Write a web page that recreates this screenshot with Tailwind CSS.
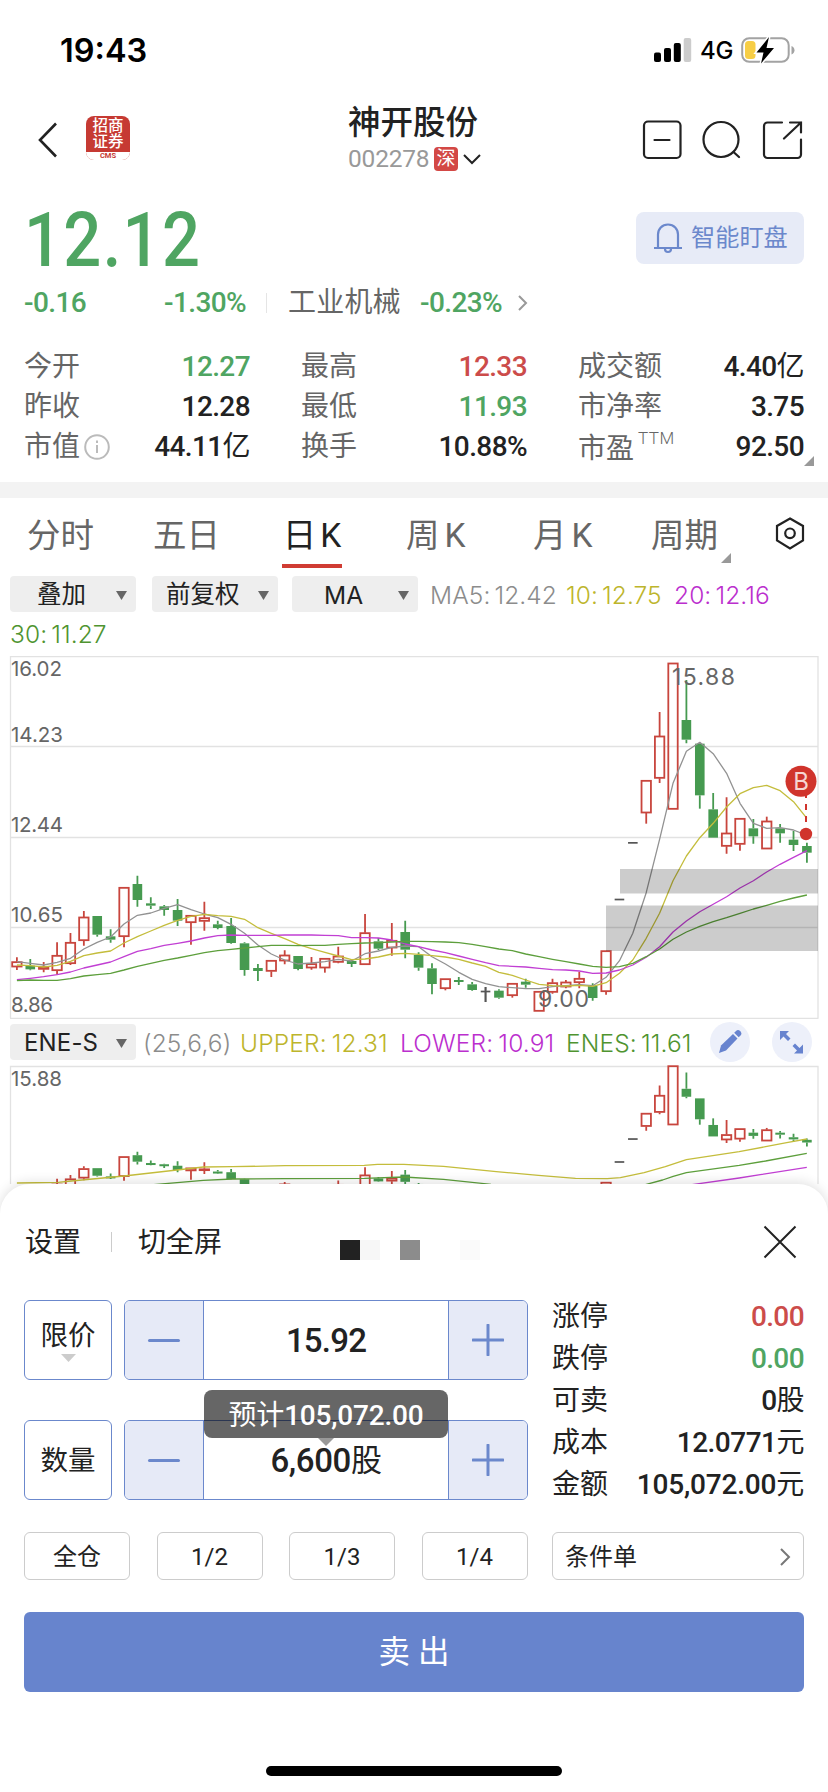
<!DOCTYPE html>
<html lang="zh-CN">
<head>
<meta charset="utf-8">
<title>神开股份 002278</title>
<script src="https://cdn.jsdelivr.net/npm/@tailwindcss/browser@4"></script>
</head>
<body class="w-[828px] h-[1792px] overflow-hidden bg-white text-[#222] font-['Roboto','Noto_Sans_CJK_SC',sans-serif] flex flex-col">

<!-- status bar -->
<div class="h-[98px] shrink-0 flex justify-between pl-[60px] pr-[33px]">
  <div class="mt-[30px] h-10 leading-[41px] text-[32.500px] font-semibold text-black font-['Inter',sans-serif]">19:43</div>
  <div class="mt-[30px] h-10 flex items-center">
    <svg class="w-[38px] h-[24px]" viewBox="0 0 38 24"><rect x="0" y="14.5" width="7" height="9.500" rx="2"/><rect x="10" y="10" width="7" height="14" rx="2"/><rect x="19.800" y="5" width="7" height="19" rx="2"/><rect x="29.700" y="0" width="7.500" height="24" rx="2" fill="#ccc"/></svg>
    <div class="ml-2 mt-px w-[34px] text-[24px] text-black font-medium font-['Inter',sans-serif] tracking-[-0.3px]">4G</div>
    <svg class="ml-[7px] w-[54px] h-[28px]" viewBox="0 0 54 28"><rect x="1.200" y="2.200" width="46.500" height="23.600" rx="7" fill="none" stroke="#a3a3a3" stroke-width="2"/><path d="M50.500 10v8.500c4-1.500 4-7 0-8.500z" fill="#a3a3a3"/><rect x="4" y="5" width="10.500" height="18" rx="3.500" fill="#f7ce46"/><path d="M28 1 15.500 16.500h7L20 27.500 33 12h-7.500z" stroke="#fff" stroke-width="3"/><path d="M28 1 15.500 16.500h7L20 27.500 33 12h-7.500z"/></svg>
  </div>
</div>

<!-- header -->
<div class="h-[92px] shrink-0 grid grid-cols-[348px_1fr_191px]">
  <div class="flex pt-[18px] pl-[38px]">
    <svg class="w-5 h-[48px]" viewBox="0 0 20 48"><path d="M18 7.500 2 24 18 40.500" fill="none" stroke="#222" stroke-width="2.600"/></svg>
    <div class="ml-[28px] w-[44px] h-[44px] rounded-[8px] overflow-hidden bg-[#c63a33] flex flex-col items-center">
      <div class="h-[36px] shrink-0 pt-[2px] text-white font-medium text-[15.500px] leading-[16px] text-center">招商<br>证券</div>
      <div class="h-[8px] w-full bg-white text-[#c63a33] text-[7.500px] leading-[7px] font-bold text-center">CMS</div>
    </div>
  </div>
  <div class="flex flex-col">
    <div class="mt-[6px] h-[38px] leading-[38px] text-[32.500px] font-medium">神开股份</div>
    <div class="mt-[3px] h-7 flex items-center">
      <span class="text-[24.500px] text-[#999] w-[86px] tracking-[-0.2px]">002278</span>
      <span class="w-6 h-6 rounded bg-[#d34845] text-white text-[19px] leading-6 text-center">深</span>
      <svg class="ml-[5px] w-[18px] h-[12px]" viewBox="0 0 18 12"><path d="M1 2l8 8 8-8" fill="none" stroke="#222" stroke-width="2"/></svg>
    </div>
  </div>
  <svg class="w-[191px] h-[92px]" viewBox="637 98 191 92" fill="none" stroke="#222" stroke-width="2.200" stroke-linecap="round"><rect x="644" y="121.500" width="36.500" height="36.500" rx="4"/><path d="M654.500 140h15M733.500 152l5.500 5M782 122.500h-14.500a3.500 3.500 0 0 0-3.500 3.500v28.500a3.500 3.500 0 0 0 3.500 3.500h30a3.500 3.500 0 0 0 3.500-3.500V139.500M790 122.500h11v10M801 122.500l-17 16"/><circle cx="721" cy="139.500" r="17.500"/></svg>
</div>

<!-- price -->
<div class="h-[92px] shrink-0 flex justify-between pl-[24px] pr-[24px]">
  <div class="mt-[10px] h-20 leading-[80px] text-[76px] font-medium text-[#4fa562] tracking-[1.5px] origin-left scale-x-[0.88]">12.12</div>
  <div class="mt-[22px] w-[168px] h-[52px] rounded-lg bg-[#e7ebf7] flex items-center pl-[17px]">
    <svg class="w-[30px] h-[32px]" viewBox="0 0 30 32" fill="none" stroke="#6b88cc" stroke-width="2.200"><path d="M1 26h28M5 26V12.500C5 7 9 2.500 15 2.500S25 7 25 12.500V26M12 27c0 4 6 4 6 0"/></svg>
    <span class="ml-[8px] mt-px text-[24.200px] text-[#6b88cc]">智能盯盘</span>
  </div>
</div>
<div class="h-[40px] shrink-0 flex items-center pt-[2px] pl-[24px] text-[28px] font-medium text-[#4fa562] tracking-[-0.6px]">
  <span class="w-[140px]">-0.16</span><span class="w-[102px]">-1.30%</span>
  <span class="w-px h-5 bg-[#e5e5e5]"></span>
  <span class="ml-[21px] w-[132px] text-[#666] font-normal tracking-[0.2px]">工业机械</span>
  <span class="w-[98px]">-0.23%</span>
  <svg class="w-[10px] h-4" viewBox="0 0 10 16"><path d="M1 1l7 7-7 7" fill="none" stroke="#999" stroke-width="2"/></svg>
</div>

<!-- quote figures -->
<div class="h-[160px] shrink-0 relative pt-[25px] pl-[24px] pr-[24px] grid grid-cols-[226px_226px_226px] gap-x-[51px] auto-rows-[40px] text-[28px] leading-[40px]">
  <div class="flex justify-between"><span class="text-[#666]">今开</span><span class="font-medium text-[#4fa562] tracking-[-0.6px]">12.27</span></div>
  <div class="flex justify-between"><span class="text-[#666]">最高</span><span class="font-medium text-[#cc4c4a] tracking-[-0.6px]">12.33</span></div>
  <div class="flex justify-between"><span class="text-[#666]">成交额</span><span class="font-medium tracking-[-0.6px]">4.40<span class="font-normal">亿</span></span></div>
  <div class="flex justify-between"><span class="text-[#666]">昨收</span><span class="font-medium tracking-[-0.6px]">12.28</span></div>
  <div class="flex justify-between"><span class="text-[#666]">最低</span><span class="font-medium text-[#4fa562] tracking-[-0.6px]">11.93</span></div>
  <div class="flex justify-between"><span class="text-[#666]">市净率</span><span class="font-medium tracking-[-0.6px]">3.75</span></div>
  <div class="flex justify-between"><span class="text-[#666] flex items-center gap-[4px]">市值<svg class="w-[26px] h-[26px]" viewBox="0 0 26 26" fill="none" stroke="#bbb" stroke-width="2"><circle cx="13" cy="13" r="11.800"/><path d="M13 11v8M13 6.500v2.500"/></svg></span><span class="font-medium tracking-[-0.6px]">44.11<span class="font-normal">亿</span></span></div>
  <div class="flex justify-between"><span class="text-[#666]">换手</span><span class="font-medium tracking-[-0.6px]">10.88%</span></div>
  <div class="flex justify-between"><span class="text-[#666] flex pt-[2px]">市盈<span class="ml-1 text-[17px] leading-[18px] font-light tracking-[0.5px]">TTM</span></span><span class="font-medium tracking-[-0.6px]">92.50</span></div>
  <svg class="absolute left-[804px] top-[134px] w-[10px] h-[10px]" viewBox="0 0 10 10"><path d="M10 0v10H0z" fill="#999"/></svg>
</div>
<div class="h-4 shrink-0 bg-[#f3f3f3]"></div>

<!-- period tabs -->
<div class="h-[78px] shrink-0 relative flex text-[33.500px] leading-[75px] text-[#666] pl-[27px]">
  <span class="w-[126px]">分时</span><span class="w-[129px]">五日</span>
  <span class="w-[60px] h-[70px] border-b-4 border-[#d03c33] text-[#222] text-center whitespace-nowrap">日<span class="ml-1">K</span></span>
  <span class="ml-[64px] w-[127px]">周<span class="ml-[5px]">K</span></span>
  <span class="w-[118px]">月<span class="ml-[5px]">K</span></span>
  <span class="w-[124px]">周期</span>
  <svg class="mt-[19px] w-[30px] h-[33px]" viewBox="0 0 30 33" fill="none" stroke="#222" stroke-width="2.200"><path d="M15 1.500 28 9v14.500L15 31.500 2 23.500V9z"/><circle cx="15" cy="16.300" r="4.800"/></svg>
  <svg class="absolute left-[721px] top-[55px] w-[10px] h-[10px]" viewBox="0 0 10 10"><path d="M10 0v10H0z" fill="#999"/></svg>
</div>

<!-- overlay selectors and moving averages -->
<div class="h-[36px] shrink-0 flex items-center pl-[10px] text-[24.500px]">
  <div class="w-[126px] h-9 pt-[2px] rounded bg-[#eee] flex items-center justify-between pl-[27px] pr-[9px] text-[#222]">叠加<svg class="w-[11px] h-[9px]" viewBox="0 0 11 9"><path d="M0 0h11L5.500 9z" fill="#666"/></svg></div>
  <div class="ml-4 w-[126px] h-9 pt-[2px] rounded bg-[#eee] flex items-center justify-between pl-[14px] pr-[9px] text-[#222]">前复权<svg class="w-[11px] h-[9px]" viewBox="0 0 11 9"><path d="M0 0h11L5.500 9z" fill="#666"/></svg></div>
  <div class="ml-[14px] w-[126px] h-9 pt-[2px] rounded bg-[#eee] flex items-center justify-between pl-[32px] pr-[9px] text-[#222] font-['Inter',sans-serif]">MA<svg class="w-[11px] h-[9px]" viewBox="0 0 11 9"><path d="M0 0h11L5.500 9z" fill="#666"/></svg></div>
  <div class="ml-[12px] pt-[3px] flex whitespace-nowrap font-['Inter',sans-serif] font-light text-[24.500px] tracking-[0.1px]">
    <span class="w-[136px] text-[#8c8c8c]">MA5:<span class="ml-[4px]">12.42</span></span>
    <span class="w-[108px] text-[#bdb52c]">10:<span class="ml-[4px]">12.75</span></span>
    <span class="text-[#bb2fce]">20:<span class="ml-[4px]">12.16</span></span>
  </div>
</div>
<div class="h-[44px] shrink-0 pl-[10px] leading-[44px] text-[24.500px] font-['Inter',sans-serif] font-light tracking-[0.1px] text-[#4f9430]">30:<span class="ml-[4px]">11.27</span></div>

<!-- main chart -->
<svg id="main" class="h-[364px] w-[828px] shrink-0" viewBox="0 656 828 364" font-family="Inter" fill="#666"></svg>

<!-- indicator row -->
<div class="h-[44px] shrink-0 flex items-center pl-[10px] whitespace-nowrap font-['Inter',sans-serif] font-light text-[24.500px] tracking-[0.15px]">
  <div class="w-[126px] h-9 pt-[2px] rounded bg-[#eee] flex items-center justify-between pl-[14px] pr-[9px] font-normal text-[24px] text-[#222]">ENE-S<svg class="w-[11px] h-[9px]" viewBox="0 0 11 9"><path d="M0 0h11L5.500 9z" fill="#666"/></svg></div>
  <span class="ml-[7px] pt-[2px] w-[97px] text-[#8c8c8c]">(25,6,6)</span>
  <span class="w-[160px] pt-[2px] text-[#bdb52c]">UPPER:<span class="ml-[5px]">12.31</span></span>
  <span class="w-[166px] pt-[2px] text-[#bb2fce]">LOWER:<span class="ml-[5px]">10.91</span></span>
  <span class="w-[144px] pt-[2px] text-[#4f9430]">ENES:<span class="ml-[4px]">11.61</span></span>
  <svg class="w-10 h-10" viewBox="0 0 40 40"><circle cx="20" cy="20" r="20" fill="#edf0fa"/><path d="M9 31l2-7.500L23 12l4.500 4.500L16 28.500z" fill="#6783cf"/><path d="M24.200 10.800l1.600-1.600a3.100 3.100 0 0 1 4.500 4.500l-1.600 1.600z" fill="#6783cf"/></svg>
  <svg class="ml-[22px] w-10 h-10" viewBox="0 0 40 40"><circle cx="20" cy="20" r="20" fill="#edf0fa"/><path d="M8 9h9l-3 3 4.500 4.500-2.500 2.500-4.500-4.500L8 18zM31 31.500h-9l3-3-4.500-4.500 2.500-2.500 4.500 4.500 3.500-3.500z" fill="#6783cf"/></svg>
</div>

<!-- indicator chart -->
<svg id="sub" class="h-[120px] w-[828px] shrink-0" viewBox="0 1064 828 120" font-family="Inter" fill="#666"></svg>

<!-- order sheet -->
<div class="relative grow flex flex-col bg-white rounded-t-[30px] shadow-[0_-2px_12px_rgba(0,0,0,0.12)]">
  <svg class="absolute left-[340px] top-[56px] w-[140px] h-5" viewBox="0 0 140 20"><path d="M0 0h20v20H0z" fill="#222"/><path d="M20 0h20v20H20z" fill="#f7f7f7"/><path d="M60 0h20v20H60z" fill="#8c8c8c"/><path d="M120 0h20v20h-20z" fill="#fafafa"/></svg>
  <div class="h-[116px] flex items-center pl-[25px] pr-[31px] text-[28px]">
    <span class="pt-[2px]">设置</span><span class="ml-[30px] w-px h-5 bg-[#ccc]"></span><span class="ml-[26px] pt-[2px]">切全屏</span>
    <svg class="ml-auto w-[34px] h-[34px]" viewBox="0 0 34 34"><path d="M1.500 1.500l31 31M32.500 1.500l-31 31" stroke="#222" stroke-width="2"/></svg>
  </div>
  <div class="flex pl-6 pr-6 justify-between h-[200px]">
    <div class="flex flex-col gap-10">
      <div class="flex gap-[13px] h-20">
        <div class="w-[88px] rounded-md border-[1.500px] border-[#6b88cc] flex flex-col items-center text-[27.500px]"><span class="mt-[17px] leading-[36px]">限价</span><svg class="w-[15px] h-2" viewBox="0 0 15 8"><path d="M0 0h15L7.500 8z" fill="#ccc"/></svg></div>
        <div class="w-[404px] -ml-px rounded-md border-[1.500px] border-[#6b88cc] overflow-hidden flex">
          <div class="w-[79px] bg-[#e6eaf7] border-r border-[#6b88cc] flex items-center justify-center"><span class="w-8 h-[3px] rounded bg-[#6b88cc]"></span></div>
          <div class="grow pt-[2px] flex items-center justify-center text-[33px] font-medium tracking-[-0.8px]">15.92</div>
          <div class="w-[79px] bg-[#e6eaf7] border-l border-[#6b88cc] flex items-center justify-center"><svg class="w-8 h-8" viewBox="0 0 32 32"><path d="M1 16h30M16 1v30" stroke="#6b88cc" stroke-width="3" stroke-linecap="round"/></svg></div>
        </div>
      </div>
      <div class="relative flex gap-[13px] h-20">
        <div class="w-[88px] pt-[2px] rounded-md border-[1.500px] border-[#6b88cc] flex items-center justify-center text-[27.500px]">数量</div>
        <div class="w-[404px] -ml-px rounded-md border-[1.500px] border-[#6b88cc] overflow-hidden flex">
          <div class="w-[79px] bg-[#e6eaf7] border-r border-[#6b88cc] flex items-center justify-center"><span class="w-8 h-[3px] rounded bg-[#6b88cc]"></span></div>
          <div class="grow pt-[2px] flex items-center justify-center text-[33px] font-medium tracking-[-0.4px]">6,600<span class="text-[31px] font-normal">股</span></div>
          <div class="w-[79px] bg-[#e6eaf7] border-l border-[#6b88cc] flex items-center justify-center"><svg class="w-8 h-8" viewBox="0 0 32 32"><path d="M1 16h30M16 1v30" stroke="#6b88cc" stroke-width="3" stroke-linecap="round"/></svg></div>
        </div>
        <div class="absolute left-[180px] top-[-30px] w-[244px] h-12 rounded-lg bg-black/60 text-white text-[28px] leading-[52px] text-center tracking-[-0.2px]">预计<span class="font-medium text-[28px]">105,072.00</span></div>
        <svg class="absolute left-[294px] top-[18px] w-4 h-2" viewBox="0 0 16 8"><path d="M0 0h16L8 8z" fill="#999"/></svg>
      </div>
    </div>
    <div class="w-[252px] -mt-[4px] text-[28px] leading-[42px]">
      <div class="flex justify-between"><span>涨停</span><span class="text-[#cc4c4a] font-medium tracking-[-0.6px]">0.00</span></div>
      <div class="flex justify-between"><span>跌停</span><span class="text-[#4fa562] font-medium tracking-[-0.6px]">0.00</span></div>
      <div class="flex justify-between"><span>可卖</span><span class="font-medium tracking-[-0.6px]">0<span class="font-normal">股</span></span></div>
      <div class="flex justify-between"><span>成本</span><span class="font-medium tracking-[-0.5px]">12.0771<span class="font-normal">元</span></span></div>
      <div class="flex justify-between"><span>金额</span><span class="font-medium tracking-[-0.2px]">105,072.00<span class="font-normal">元</span></span></div>
    </div>
  </div>
  <div class="mt-[32px] px-6 h-12 flex justify-between text-[24px]">
    <div class="w-[106px] pt-px rounded-md border border-[#ccc] flex items-center justify-center">全仓</div>
    <div class="w-[106px] pt-[2px] rounded-md border border-[#ccc] flex items-center justify-center">1/2</div>
    <div class="w-[106px] pt-[2px] rounded-md border border-[#ccc] flex items-center justify-center">1/3</div>
    <div class="w-[106px] pt-[2px] rounded-md border border-[#ccc] flex items-center justify-center">1/4</div>
    <div class="w-[252px] pt-px -ml-[2px] rounded-md border border-[#ccc] flex items-center justify-between pl-3 pr-3">条件单<svg class="w-[11px] h-[18px]" viewBox="0 0 11 18"><path d="M1 1l8 8-8 8" fill="none" stroke="#777" stroke-width="2"/></svg></div>
  </div>
  <div class="mt-8 mx-6 h-20 rounded-md bg-[#6784cd] text-white text-[31.500px] leading-[82px] text-center">卖 出</div>
  <div class="mt-[74px] mx-auto w-[296px] h-[10px] rounded-full bg-black"></div>
</div>

<script>
// kind, high, body top, body bottom, low — in thirds of a pixel below y=650
const C=[['r',922,935,951,960],['g',927,947,958,961],['r',936,950,958,967],['r',877,916,962,974],['r',849,877,941,945],['r',783,801,872,887],['g',798,798,854,860],['g',838,859,869,878],['r',712,712,860,892],['g',677,702,750,770],['g',742,760,767,777],['g',765,769,780,797],['g',747,780,812,828],['r',796,796,818,884],['r',755,803,814,842],['g',812,823,834,838],['g',804,828,879,881],['g',877,880,960,977],['g',942,954,963,993],['r',931,931,964,981],
['r',901,915,933,943],['g',918,918,957,961],['r',921,941,954,959],['r',925,925,954,968],['r',890,918,937,940],['g',928,933,942,951],['r',792,848,944,944],['g',864,874,896,900],['r',819,871,894,917],['g',812,846,899,925],['g',907,915,953,962],['g',940,955,1002,1033],['r',986,986,1016,1021],['g',981,990,996,1005],['g',996,1003,1020,1022],['d',1011,1022,1025,1056],['g',1018,1022,1043,1046],['r',1000,1000,1037,1043],['g',986,995,1004,1013],['r',1024,1024,1084,1084],['r',986,998,1027,1031],['r',990,996,1011,1015],['r',965,985,998,1015],['g',1000,1007,1044,1052],['r',902,902,1025,1034],['d',746,746,750,750],['d',576,576,580,580],['r',391,391,489,521],['r',186,258,385,399],['r',39,39,478,478],['g',90,210,269,280],['g',281,281,436,476],['g',429,478,563,563],['r',442,549,589,611],['r',505,505,583,602],['g',507,535,559,581],['r',500,513,597,597],['g',522,535,550,578],['g',543,569,585,603],['g',578,588,608,638]];
const M={
'#929292':[935,940,945,937,925,897,877,861,822,796,789,775,764,779,792,803,823,850,885,912,930,942,939,935,928,933,911,903,892,888,890,920,942,967,988,1001,1010,1013,1016,1016,1010,1007,1004,1007,982,932,850,728,568,400,304,277,311,370,460,520,535,533,540,556],
'#c4bd3c':[945,947,951,946,934,917,909,903,879,860,843,826,811,799,793,797,799,808,833,850,866,883,896,907,918,929,927,921,912,910,913,917,921,928,939,949,967,976,990,1003,1007,1008,1006,1009,998,970,930,865,790,692,618,563,520,471,431,413,406,422,455,505],
'#c13fd3':[989,985,980,974,966,954,945,936,920,904,896,886,880,873,864,857,855,856,856,856,855,855,855,856,857,863,863,864,870,882,890,900,908,918,928,938,947,949,951,955,959,960,963,970,969,960,945,922,890,846,813,785,763,740,714,692,666,643,622,602],
'#5d9f3c':[992,990,991,991,986,978,974,970,960,949,940,931,924,916,908,902,898,894,890,886,886,887,886,886,883,881,879,878,876,874,874,875,876,878,883,890,897,902,912,920,928,935,942,949,952,950,940,920,897,868,846,829,815,803,790,777,766,754,744,735]};
const X=i=>16.9+i*13.39, Y=v=>650+v/3, Y2=v=>1065.7+(Y(v)-663)*.405;
const col={r:'#c8453d',g:'#469a50',d:'#555'};
function candles(y){
  let s='';
  C.forEach(([k,h,t,b,l],i)=>{
    const x=X(i),c=col[k],w=k=='r'?4.7:4.8;
    if(y(l)-y(h)>2) s+=`<path d="M${x} ${y(h)}V${y(t)}M${x} ${y(b)}V${y(l)}" stroke="${c}" stroke-width="1.800"/>`;
    if(k=='r') s+=`<rect x="${x-w}" y="${y(t)+.5}" width="${2*w}" height="${Math.max(y(b)-y(t)-1,.8)}" fill="none" stroke="${c}" stroke-width="1.800"/>`;
    else if(k=='d'){ s+=`<rect x="${x-w}" y="${y(t)}" width="${2*w}" height="1.700" fill="${c}"/>`; if(l-h>9) s+=`<path d="M${x} ${y(h)}V${y(l)}" stroke="${c}" stroke-width="1.600"/>`; }
    else s+=`<rect x="${x-w}" y="${y(t)}" width="${2*w}" height="${Math.max(y(b)-y(t),2)}" fill="${c}"/>`;
  });
  return s;
}
const line=(p,c)=>`<polyline points="${p}" fill="none" stroke="${c}" stroke-width="1.300" stroke-linejoin="round"/>`;
const txt=(x,y,w,f,t)=>`<text x="${x}" y="${y}" textLength="${w}" font-size="${f}">${t}</text>`;
let s='<path d="M10.500 656V1018M818 656V1018M10 656.700H818.500M10 746.500H818M10 837.500H818M10 927.500H818M10 1018.300H818.500" stroke="#e2e2e2" stroke-width="1.300" fill="none"/>';
s+=txt(11,676,51,20.5,'16.02')+txt(11,742,52,20.5,'14.23')+txt(11,832,52,20.5,'12.44')+txt(11,922,52,20.5,'10.65')+txt(11,1012,42,20.5,'8.86');
s+=candles(Y);
for(const c in M) s+=line(M[c].map((v,i)=>X(i).toFixed(1)+','+Y(v).toFixed(1)).join(' '),c);
s+='<path d="M606 905.500H818V951H606zM620 869H818V893.500H620z" fill="#000" fill-opacity=".2"/>';
s+=txt(672,685,63,23,'15.88')+txt(538,1006.5,51,23,'9.00');
s+='<path d="M806 791v35" stroke="#d0342c" stroke-width="2" stroke-dasharray="6 6" stroke-dashoffset="-1"/><circle cx="806" cy="834" r="6.200" fill="#d0342c"/><circle cx="801" cy="781.300" r="15.500" fill="#d0342c"/><text x="801" y="790" text-anchor="middle" font-size="24" fill="#f6d5d3">B</text>';
document.getElementById('main').innerHTML=s;

const P=a=>a.map(([x,y])=>(x/1.894).toFixed(1)+','+(1010+y/3).toFixed(1)).join(' ');
s='<path d="M10.500 1184V1066.500H818V1184" stroke="#e2e2e2" stroke-width="1.300" fill="none"/>'+txt(11,1086,51,20.5,'15.88')+candles(Y2);
s+=line(P([[32,519],[110,517],[135,513],[235,498],[335,480],[385,471],[440,470],[540,467],[690,466],[715,463],[765,463],[840,469],[940,485],[1020,496],[1090,505],[1150,506],[1175,503],[1220,488],[1260,470],[1300,449],[1400,425],[1450,410],[1490,398],[1528,387]]),'#c4bd3c');
s+=line(P([[290,524],[385,511],[440,507],[540,506],[690,505],[765,501],[840,508],[930,523]]),'#5d9f3c')+line(P([[1222,524],[1255,510],[1275,499],[1300,488],[1400,466],[1450,453],[1528,430]]),'#5d9f3c');
s+=line(P([[1310,524],[1400,504],[1440,494],[1528,472]]),'#c13fd3');
document.getElementById('sub').innerHTML=s;
</script>
</body>
</html>
